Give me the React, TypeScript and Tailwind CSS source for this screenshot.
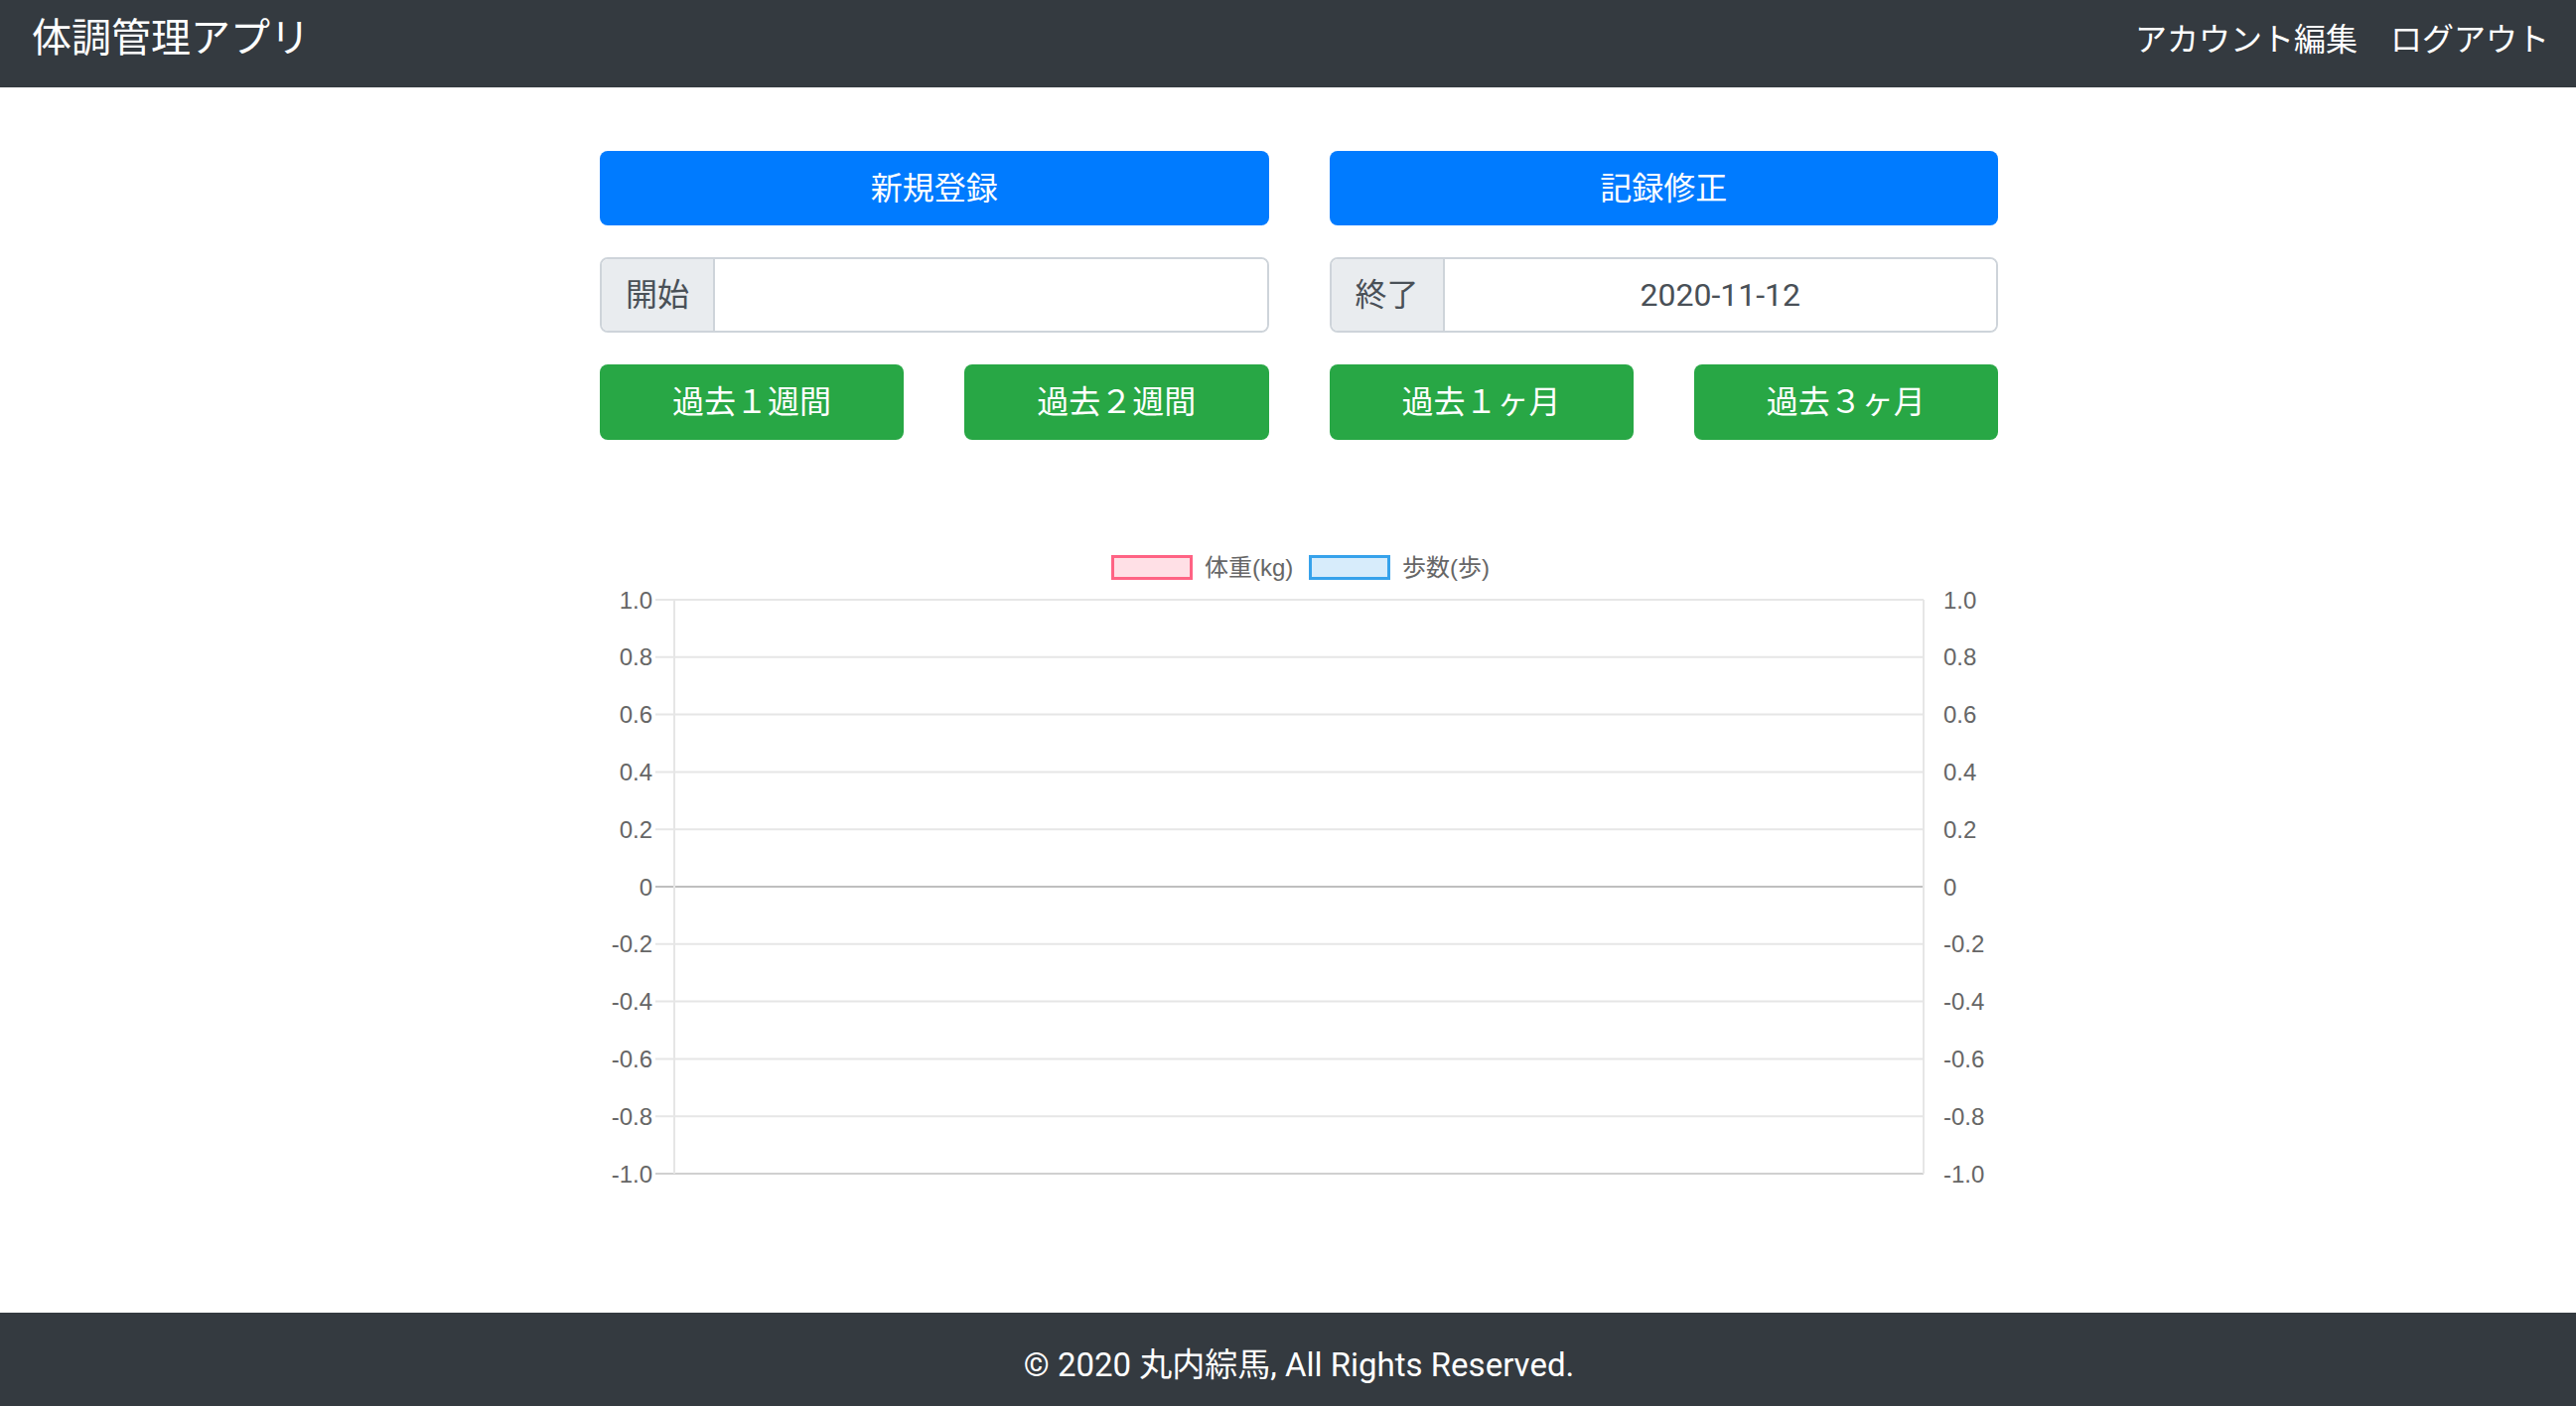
import React from "react";

// 体調管理アプリ — トップ画面（期間選択 + 体重/歩数グラフ）

const ticks = ["1.0", "0.8", "0.6", "0.4", "0.2", "0", "-0.2", "-0.4", "-0.6", "-0.8", "-1.0"];

function EmptyChart() {
  const top = 74;
  const step = 57.8;
  const left = 75;
  const right = 1333;
  const bottom = top + step * 10;

  return (
    <svg width="1408" height="670" viewBox="0 0 1408 670" className="block">
      {/* legend */}
      <rect x="516.5" y="30.5" width="79" height="22" fill="rgba(255,99,132,0.2)" stroke="rgb(255,99,132)" strokeWidth="3" />
      <text x="609" y="50" fontSize="24" fill="#666" fontFamily="'Liberation Sans','Noto Sans CJK JP',sans-serif">
        体重(kg)
      </text>
      <rect x="715.5" y="30.5" width="79" height="22" fill="rgba(54,162,235,0.2)" stroke="rgb(54,162,235)" strokeWidth="3" />
      <text x="808" y="50" fontSize="24" fill="#666" fontFamily="'Liberation Sans','Noto Sans CJK JP',sans-serif">
        歩数(歩)
      </text>

      {/* grid */}
      {ticks.map((t, i) => {
        const y = top + step * i;
        const stroke = t === "0" ? "#bfbfbf" : i === 10 ? "#d0d0d0" : "#e6e6e6";
        return (
          <g key={t}>
            <line x1="56" x2={right} y1={y} y2={y} stroke={stroke} strokeWidth="2" />
            <text x="53" y={y + 8.6} textAnchor="end" fontSize="24" fill="#666" fontFamily="'Liberation Sans',sans-serif">
              {t}
            </text>
            <text x="1353" y={y + 8.6} fontSize="24" fill="#666" fontFamily="'Liberation Sans',sans-serif">
              {t}
            </text>
          </g>
        );
      })}
      <line x1={left} x2={left} y1={top} y2={bottom} stroke="#e6e6e6" strokeWidth="2" />
      <line x1={right} x2={right} y1={top} y2={bottom} stroke="#e6e6e6" strokeWidth="2" />
    </svg>
  );
}

function DateField({ label, value }: { label: string; value: string }) {
  return (
    <div className="col-span-2 flex h-[76px] overflow-hidden rounded-[8px] border-2 border-[#ced4da]">
      <div className="flex w-[114px] shrink-0 items-center justify-center border-r-2 border-[#ced4da] bg-[#e9ecef] text-[32px] text-[#495057]">
        {label}
      </div>
      <div className="flex flex-1 items-center justify-center bg-white text-[32px] text-[#495057]">{value}</div>
    </div>
  );
}

export default function App() {
  return (
    <div className="flex min-h-screen flex-col bg-white font-['Roboto','Noto_Sans_CJK_JP',sans-serif]">
      <header className="flex h-[88px] items-start justify-between bg-[#343a40] pl-8 pr-[27px] text-white">
        <div className="pt-[9px] text-[40px] leading-[60px]">体調管理アプリ</div>
        <nav className="flex gap-[33px] pt-[16px] text-[32px] leading-[48px]">
          <span>アカウント編集</span>
          <span>ログアウト</span>
        </nav>
      </header>

      <div className="flex justify-center pl-[22px]">
        <main className="w-[1408px] pt-[64px]">
          <div className="grid grid-cols-4 gap-x-[61px] gap-y-[32px] text-[32px] text-white">
            <button className="col-span-2 h-[75px] rounded-[8px] bg-[#007bff]">新規登録</button>
            <button className="col-span-2 h-[75px] rounded-[8px] bg-[#007bff]">記録修正</button>
            <DateField label="開始" value="" />
            <DateField label="終了" value="2020-11-12" />
            <button className="h-[76px] rounded-[8px] bg-[#28a745]">過去１週間</button>
            <button className="h-[76px] rounded-[8px] bg-[#28a745]">過去２週間</button>
            <button className="h-[76px] rounded-[8px] bg-[#28a745]">過去１ヶ月</button>
            <button className="h-[76px] rounded-[8px] bg-[#28a745]">過去３ヶ月</button>
          </div>

          <div className="mt-[87px]">
            <EmptyChart />
          </div>
        </main>
      </div>

      <footer className="mt-auto flex h-[94px] items-center justify-center bg-[#343a40] pl-[22px] pt-[12px] text-[33px] text-white">
        © 2020 丸内綜馬, All Rights Reserved.
      </footer>
    </div>
  );
}
